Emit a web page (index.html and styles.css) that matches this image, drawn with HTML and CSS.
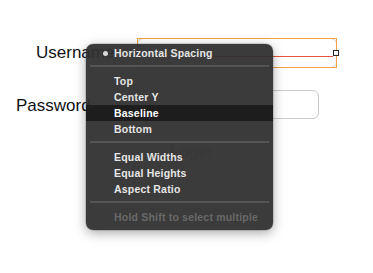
FILE: index.html
```html
<!DOCTYPE html>
<html lang="en">
<head>
    <meta charset="UTF-8">
    <meta name="viewport" content="width=device-width, initial-scale=1.0">
    <title>Constraints</title>
    <link rel="stylesheet" href="styles.css">
</head>
<body>
    <div class="canvas">
        <div class="row row-user">
            <span class="label">Username</span>
            <div class="field selected">
                <span class="guide"></span>
                <span class="handle"></span>
            </div>
        </div>
        <div class="row row-pass">
            <span class="label">Password</span>
            <div class="field"></div>
        </div>
        <div class="login">Login</div>

        <div class="menu">
            <div class="item checked">Horizontal Spacing</div>
            <div class="sep"></div>
            <div class="item">Top</div>
            <div class="item">Center Y</div>
            <div class="item active">Baseline</div>
            <div class="item">Bottom</div>
            <div class="sep"></div>
            <div class="item">Equal Widths</div>
            <div class="item">Equal Heights</div>
            <div class="item">Aspect Ratio</div>
            <div class="sep"></div>
            <div class="item disabled">Hold Shift to select multiple</div>
        </div>
    </div>
</body>
</html>
```

FILE: styles.css
```css
*{
    box-sizing: border-box;
    padding: 0;
    margin: 0;
}
body{
    background: #fff;
    font-family: "Liberation Sans", Arial, sans-serif;
}
.canvas{
    position: relative;
    width: 373px;
    height: 273px;
    padding-top: 38px;
}
.row{
    display: flex;
    align-items: center;
}
.label{
    font-size: 17px;
    color: #111;
    width: 101px;
}
.row-user{
    height: 30px;
}
.row-user .label{
    margin-left: 36px;
}
.row-pass{
    height: 29px;
    margin-top: 22px;
}
.row-pass .label{
    margin-left: 16px;
    padding-top: 3px;
}
.field{
    position: relative;
    height: 100%;
    border: 1px solid #cbcbcb;
    border-radius: 6px;
}
.row-user .field{
    width: 200px;
}
.row-pass .field{
    width: 202px;
}
.field.selected::before{
    content: "";
    position: absolute;
    top: -1px;
    left: -1px;
    right: -1px;
    bottom: -1px;
    border: 1px solid #f2a340;
}
.guide{
    position: absolute;
    top: 17px;
    left: 40px;
    right: 3px;
    height: 1px;
    background: #e8533f;
}
.handle{
    position: absolute;
    top: 11px;
    right: -3px;
    width: 6px;
    height: 6px;
    border: 1px solid #2a2a2a;
    background: #fff;
}
.login{
    margin-top: 23px;
    padding-left: 170px;
    font-size: 17px;
    line-height: 20px;
    color: #b0b0b0;
}
.menu{
    position: absolute;
    left: 86px;
    top: 44px;
    width: 187px;
    padding: 1px 0 5px;
    background: rgba(48, 48, 48, 0.95);
    border-radius: 7px;
    box-shadow: 0 3px 12px rgba(0, 0, 0, 0.35), 0 0 0 0.5px rgba(0, 0, 0, 0.25);
    overflow: hidden;
}
.item{
    position: relative;
    height: 16px;
    line-height: 16px;
    padding-left: 28px;
    font-size: 10.5px;
    font-weight: bold;
    letter-spacing: 0.2px;
    color: #e6e6e6;
    white-space: nowrap;
}
.item.checked::before{
    content: "";
    position: absolute;
    left: 17px;
    top: 6px;
    width: 5px;
    height: 5px;
    border-radius: 50%;
    background: #d8d8d8;
}
.item.active{
    background: #1d1d1d;
    color: #fff;
}
.item.disabled{
    color: #686868;
}
.sep{
    height: 12px;
    padding: 4px 4px 0;
}
.sep::after{
    content: "";
    display: block;
    height: 2px;
    background: #555;
}
```
